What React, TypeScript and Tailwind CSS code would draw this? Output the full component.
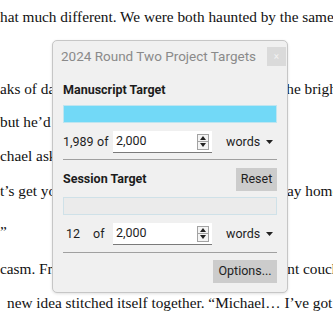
import React from "react";

const serif = { fontFamily: '"Liberation Serif", "Times New Roman", serif' };
const ui = { fontFamily: 'Roboto, "Noto Sans", sans-serif' };

const Spinner: React.FC = () => (
  <div className="flex flex-col w-[12px] h-[16px] border border-[#a3a3a3] bg-[#f4f4f4] mr-[3px]">
    <div className="flex-1 flex items-center justify-center border-b border-[#a3a3a3]">
      <svg width="6" height="4" viewBox="0 0 6 4"><path d="M0 4 L3 0 L6 4 Z" fill="#222" /></svg>
    </div>
    <div className="flex-1 flex items-center justify-center">
      <svg width="6" height="4" viewBox="0 0 6 4"><path d="M0 0 L6 0 L3 4 Z" fill="#222" /></svg>
    </div>
  </div>
);

const CountRow: React.FC<{ done: string; numW: string; ofW: string }> = ({ done, numW, ofW }) => (
  <div className="flex items-center h-[22px] text-[12.5px] text-[#1e1e1e]">
    <span className={numW}>{done}</span>
    <span className={ofW}>of</span>
    <div className="w-[99px] h-[22px] bg-white border-b border-[#7a7a7a] flex items-center">
      <span className="pl-[3px] flex-1">2,000</span>
      <Spinner />
    </div>
    <span className="ml-[14px]">words</span>
    <svg className="ml-auto mr-[4px]" width="7" height="4" viewBox="0 0 7 4"><path d="M0 0 L7 0 L3.5 4 Z" fill="#222" /></svg>
  </div>
);

const Panel: React.FC = () => (
  <div className="absolute left-[52px] top-[40px] w-[236px] h-[253px] bg-[#f0f0f0] border border-[#c6c6c6] rounded-[5px] shadow-[0_1px_3px_rgba(0,0,0,0.12)]" style={ui}>
    <div className="flex items-start h-[34px] pl-[8px] pr-[1px] pt-[6px]">
      <span className="text-[13.5px] text-[#8a8a8a] mt-[-1px]">2024 Round Two Project Targets</span>
      <div className="ml-auto w-[19px] h-[19px] bg-[#dadada] flex items-center justify-center text-[10px] text-[#f2f2f2]">×</div>
    </div>
    <div className="px-[10px]">
      <div className="h-[30px] flex items-center text-[12.5px] font-bold text-[#1c1c1c]">Manuscript Target</div>
      <div className="h-[18px] bg-[#72d9f7] border border-[#bfe5f0]"></div>
      <div className="mt-[8px]">
        <CountRow done="1,989" numW="w-[34px]" ofW="w-[16px]" />
      </div>
      <div className="mt-[6px] border-t border-[#a0a0a0]"></div>
      <div className="mt-[8px] h-[23px] flex items-center justify-between">
        <span className="text-[12.5px] font-bold text-[#1c1c1c]">Session Target</span>
        <div className="w-[41px] h-[23px] bg-[#cccccc] flex items-center justify-center text-[12.5px] text-[#1e1e1e]">Reset</div>
      </div>
      <div className="mt-[6px] h-[18px] bg-[#ebebeb] border border-[#cfe1e8]"></div>
      <div className="mt-[8px]">
        <CountRow done="12" numW="w-[30px] pl-[3px]" ofW="w-[20px]" />
      </div>
      <div className="mt-[7px] border-t border-[#a0a0a0]"></div>
      <div className="mt-[7px] flex justify-end">
        <div className="w-[64px] h-[23px] bg-[#cccccc] flex items-center justify-center text-[12.5px] text-[#1e1e1e]">Options...</div>
      </div>
    </div>
  </div>
);

const Line: React.FC<{ h: string; left?: string; right?: string; rightAt?: string; pl?: string }> = ({ h, left, right, rightAt, pl }) => (
  <div className={`${h} leading-[34px] whitespace-nowrap flex ${pl ?? ""}`}>
    {right !== undefined ? (
      <>
        <span className={`${rightAt ?? "w-[282px]"} shrink-0 overflow-hidden`}>{left}</span>
        <span>{right}</span>
      </>
    ) : (
      <span>{left}</span>
    )}
  </div>
);

export default function App() {
  return (
    <div className="relative w-[333px] h-[333px] overflow-hidden bg-white text-[15.3px] text-[#111]" style={serif}>
      <Line h="h-[36px]" left="hat much different. We were both haunted by the same thing." />
      <Line h="h-[36px]" left="" />
      <Line h="h-[33px]" left="aks of dawn crept over the hills and" right="the bright sky." rightAt="w-[282px]" />
      <Line h="h-[34px]" left="but he’d been awake all night" />
      <Line h="h-[35px]" left="chael asked me again" />
      <Line h="h-[41px]" left="t’s get you home before" right="way home." rightAt="w-[276px]" />
      <Line h="h-[37px]" left="”" />
      <Line h="h-[34px]" left="casm. From the corner of the room, the" right="int couch" rightAt="w-[283px]" />
      <Line h="h-[35px]" pl="pl-[7px]" left="new idea stitched itself together. “Michael… I’ve got" />
      <Line h="h-[34px]" left="wondering about the same old machine. I couldn’t tell" />
      <Panel />
    </div>
  );
}
